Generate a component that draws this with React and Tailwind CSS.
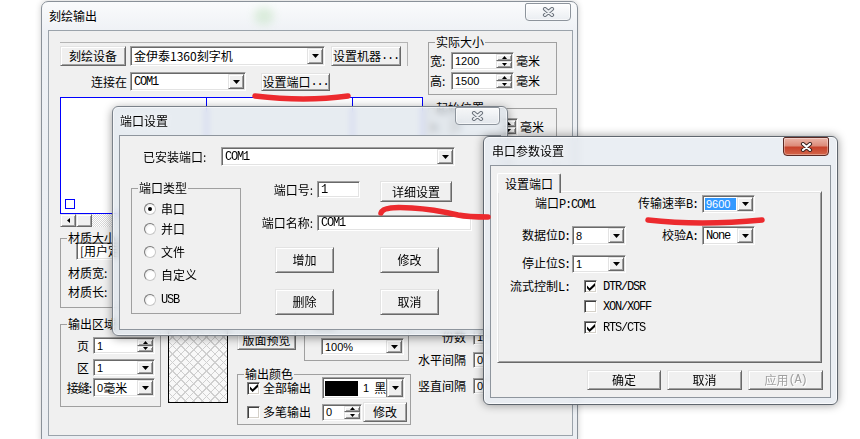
import React from "react";

const mono = "font-['Liberation_Mono','Noto_Sans_CJK_SC',monospace] text-[12px] tracking-[-1.2px]";
const sans = "font-['Liberation_Sans','Noto_Sans_CJK_SC',sans-serif] text-[11px]";
const raised =
  "bg-[#f0f0f0] border border-t-[#e3e3e3] border-l-[#e3e3e3] border-r-[#696969] border-b-[#696969] shadow-[inset_1px_1px_0_#ffffff,inset_-1px_-1px_0_#a0a0a0]";
const sunken =
  "bg-white border border-t-[#a0a0a0] border-l-[#a0a0a0] border-r-white border-b-white shadow-[inset_1px_1px_0_#696969,inset_-1px_-1px_0_#e3e3e3]";

function Btn({ className = "", children, disabled = false }) {
  return (
    <div
      className={`${raised} shrink-0 flex items-center justify-center whitespace-nowrap leading-[12px] ${
        disabled ? "text-[#a0a0a0] [text-shadow:1px_1px_0_#ffffff]" : ""
      } ${className}`}
    >
      {children}
    </div>
  );
}

function DropBtn() {
  return (
    <div className={`${raised} w-[16px] shrink-0 flex items-center justify-center`}>
      <svg width="7" height="4" viewBox="0 0 7 4">
        <path d="M0 0h7L3.5 4z" fill="#000" />
      </svg>
    </div>
  );
}

function Combo({ className = "", textClass = "", children }) {
  return (
    <div className={`${sunken} shrink-0 flex items-stretch p-[1px] ${className}`}>
      <div className={`flex-1 min-w-0 flex items-center pl-[2px] overflow-hidden whitespace-nowrap leading-[12px] ${textClass}`}>
        {children}
      </div>
      <DropBtn />
    </div>
  );
}

function Field({ className = "", textClass = "", children }) {
  return (
    <div className={`${sunken} shrink-0 flex items-center pl-[3px] overflow-hidden whitespace-nowrap leading-[12px] ${textClass} ${className}`}>
      {children}
    </div>
  );
}

function SpinField({ className = "", textClass = "", children }) {
  return (
    <div className={`${sunken} shrink-0 flex items-stretch p-[1px] ${className}`}>
      <div className={`flex-1 min-w-0 flex items-center pl-[2px] overflow-hidden whitespace-nowrap leading-[12px] ${textClass}`}>
        {children}
      </div>
      <div className="w-[16px] shrink-0 flex flex-col">
        <div className={`${raised} flex-1 flex items-center justify-center`}>
          <svg width="5" height="3" viewBox="0 0 5 3">
            <path d="M2.5 0L5 3H0z" fill="#000" />
          </svg>
        </div>
        <div className={`${raised} flex-1 flex items-center justify-center`}>
          <svg width="5" height="3" viewBox="0 0 5 3">
            <path d="M0 0h5L2.5 3z" fill="#000" />
          </svg>
        </div>
      </div>
    </div>
  );
}

function Group({ title, className = "", children }) {
  return (
    <fieldset className={`border border-[#a0a0a0] min-w-0 shrink-0 ${className}`}>
      <legend className="ml-[6px] px-[1px] leading-[12px] whitespace-nowrap">{title}</legend>
      {children}
    </fieldset>
  );
}

function Radio({ on = false }) {
  return (
    <span className="w-[12px] h-[12px] shrink-0 rounded-full border border-t-[#7a7a7a] border-l-[#7a7a7a] border-r-[#c8c8c8] border-b-[#c8c8c8] bg-[radial-gradient(circle_at_65%_65%,#ffffff_0%,#ffffff_45%,#d6d6d6_100%)] flex items-center justify-center">
      {on && <span className="w-[4px] h-[4px] rounded-full bg-black" />}
    </span>
  );
}

function Check({ on = false }) {
  return (
    <span className="w-[13px] h-[13px] shrink-0 bg-white border border-t-[#808080] border-l-[#808080] border-r-white border-b-white shadow-[inset_1px_1px_0_#404040,inset_-1px_-1px_0_#d4d0c8] flex items-center justify-center">
      {on && (
        <svg width="8" height="8" viewBox="0 0 7 7">
          <path d="M0 2.2L2.3 4.5L7 0V2.6L2.3 7L0 4.7Z" fill="#000" />
        </svg>
      )}
    </span>
  );
}

function CloseBtn({ active = false, className = "" }) {
  return (
    <div
      className={`shrink-0 rounded-b-[4px] rounded-t-[2px] border flex items-center justify-center ${
        active
          ? "border-[#5c2a24] bg-[linear-gradient(180deg,#ebb6a9_0%,#dd8c7a_45%,#c7432c_55%,#d4664a_100%)] shadow-[inset_0_0_0_1px_rgba(255,255,255,0.35)]"
          : "border-[#8d949c] bg-[linear-gradient(180deg,rgba(255,255,255,0.8)_0%,rgba(228,232,237,0.6)_100%)] shadow-[inset_0_0_0_1px_rgba(255,255,255,0.6)]"
      } ${className}`}
    >
      <svg width="13" height="10" viewBox="0 0 13 10">
        <path d="M3 2L10 8M10 2L3 8" stroke={active ? "#3c2420" : "#6c737c"} strokeWidth="4.2" strokeLinecap="round" fill="none" />
        <path d="M3 2L10 8M10 2L3 8" stroke={active ? "#ffffff" : "#eceff2"} strokeWidth="2.2" strokeLinecap="round" fill="none" />
      </svg>
    </div>
  );
}

function MainWindow() {
  return (
    <div className="absolute left-[41px] top-[1px] w-[537px] h-[442px] rounded-t-[7px] border border-[#8a9199] bg-[linear-gradient(180deg,#fafbfc_0px,#eef1f5_30px,#ebeef2_100%)] shadow-[0_0_6px_rgba(0,0,0,0.2)] flex flex-col pl-[6px] pr-[4px] pb-[6px]">
      <div className="relative h-[28px] shrink-0 flex items-start">
        <span className="ml-[1px] mt-[8px] leading-[12px] [text-shadow:0_0_5px_#ffffff]">刻绘输出</span>
        <div className="absolute left-[206px] top-[5px] w-[20px] h-[18px] rounded-full bg-[#9fd59a] opacity-30 blur-[4px]" />
        <CloseBtn className="ml-auto mt-[1px] mr-[2px] w-[46px] h-[18px]" />
      </div>
      <div className="flex-1 min-h-0 overflow-hidden border border-[#9ba3ab] bg-[#f0f0f0] pl-[11px] pt-[5px] flex flex-col">
        {/* top section */}
        <div className="flex items-start shrink-0">
          <div className="w-[363px] mt-[6px] shrink-0 flex flex-col">
            <div className="w-[348px] h-[24px] border-t border-r border-[#b4b4b4] flex items-end">
              <Btn className="w-[66px] h-[20px]">刻绘设备</Btn>
              <Combo className="ml-[4px] w-[195px] h-[20px]">金伊泰1360刻字机</Combo>
              <Btn className="ml-[6px] w-[70px] h-[20px]">
                设置机器<span className={mono}>...</span>
              </Btn>
            </div>
            <div className="mt-[6px] h-[19px] flex items-center">
              <span className="w-[67px] text-right leading-[12px]">连接在</span>
              <Combo className="ml-[3px] w-[116px] h-[19px]" textClass={mono}>
                COM1
              </Combo>
              <Btn className="ml-[15px] w-[69px] h-[18px]">
                设置端口<span className={mono}>...</span>
              </Btn>
            </div>
            <div className="mt-[6px] h-[117px] border border-[#0000ff] bg-white flex">
              <div className="w-[145px] flex flex-col justify-end pl-[4px] pb-[4px]">
                <div className="w-[10px] h-[10px] border border-[#0000ff]" />
              </div>
              <div className="w-[146px] border-l border-[#0000ff]" />
              <div className="flex-1 border-l border-[#0000ff]" />
            </div>
            <div className="h-[13px] flex">
              <div className={`${raised} w-[16px] flex items-center justify-center`}>
                <svg width="3" height="5" viewBox="0 0 3 5">
                  <path d="M3 0v5L0 2.5z" fill="#000" />
                </svg>
              </div>
              <div className={`${raised} w-[16px]`} />
              <div className="flex-1 bg-[image:repeating-conic-gradient(#d8d8d8_0_25%,#ffffff_0_50%)] bg-[length:2px_2px]" />
            </div>
          </div>
          <div className="ml-[5px] w-[129px] shrink-0 flex flex-col">
            <Group title="实际大小" className="h-[59px]">
              <div className="pl-[1px] pt-[4px] flex flex-col gap-[2px]">
                <div className="h-[18px] flex items-center">
                  <span className="w-[20px] leading-[12px]">宽:</span>
                  <SpinField className="ml-[1px] w-[63px] h-[18px]" textClass={sans}>
                    1200
                  </SpinField>
                  <span className="ml-[2px] leading-[12px]">毫米</span>
                </div>
                <div className="h-[18px] flex items-center">
                  <span className="w-[20px] leading-[12px]">高:</span>
                  <SpinField className="ml-[1px] w-[63px] h-[18px]" textClass={sans}>
                    1500
                  </SpinField>
                  <span className="ml-[2px] leading-[12px]">毫米</span>
                </div>
              </div>
            </Group>
            <Group title="起始位置" className="mt-[7px] h-[118px]">
              <div className="pl-[1px] pt-[4px] flex flex-col gap-[4px]">
                <div className="h-[18px] flex items-center">
                  <span className="w-[20px] leading-[12px]">X:</span>
                  <SpinField className="ml-[1px] w-[67px] h-[18px]" textClass={sans}>
                    0
                  </SpinField>
                  <span className="ml-[2px] leading-[12px]">毫米</span>
                </div>
              </div>
            </Group>
          </div>
        </div>

        {/* bottom section */}
        <Group title="材质大小" className="mt-[5px] w-[240px] h-[76px]">
          <Combo className="ml-[15px] -mt-[2px] w-[150px] h-[18px]">[用户定义]</Combo>
          <div className="mt-[4px] h-[17px] flex items-center pl-[7px]">
            <span className="leading-[12px]">材质宽:</span>
          </div>
          <div className="mt-[2px] h-[17px] flex items-center pl-[7px]">
            <span className="leading-[12px]">材质长:</span>
          </div>
        </Group>

        <div className="mt-[10px] flex items-start">
          <Group title="输出区域" className="w-[101px] h-[89px]">
            <div className="flex flex-col">
              <div className="mt-[7px] h-[17px] flex items-center">
                <span className="w-[32px] pr-[4px] text-right leading-[12px]">页</span>
                <SpinField className="w-[62px] h-[17px]" textClass={sans}>
                  1
                </SpinField>
              </div>
              <div className="mt-[5px] h-[17px] flex items-center">
                <span className="w-[32px] pr-[4px] text-right leading-[12px]">区</span>
                <Combo className="w-[62px] h-[17px]" textClass={sans}>
                  1
                </Combo>
              </div>
              <div className="mt-[2px] h-[19px] flex items-center">
                <span className="w-[32px] pr-[2px] text-right whitespace-nowrap tracking-[-1px] leading-[12px]">接缝:</span>
                <Combo className="w-[62px] h-[19px]">
                  <span className={sans}>0</span>毫米
                </Combo>
              </div>
            </div>
          </Group>

          <div className="ml-[7px] mt-[8px] w-[60px] h-[77px] shrink-0 border border-black bg-[#f8f8f8] bg-[image:repeating-linear-gradient(45deg,#cfcfcf_0_1px,transparent_1px_6px),repeating-linear-gradient(-45deg,#cfcfcf_0_1px,transparent_1px_6px)]" />

          <div className="ml-[9px] w-[174px] shrink-0 flex flex-col">
            <div className="flex items-start">
              <Btn className="mt-[12px] w-[59px] h-[20px]">版面预览</Btn>
              <Group title="缩放" className="ml-[8px] w-[105px] h-[43px]">
                <Combo className="ml-[16px] mt-[8px] w-[83px] h-[17px]" textClass={sans}>
                  100%
                </Combo>
              </Group>
            </div>
            <Group title="输出颜色" className="mt-[7px] w-[174px] h-[57px]">
              <div className="-mt-[3px] h-[22px] flex items-center pl-[9px]">
                <Check on />
                <span className="ml-[3px] w-[57px] leading-[12px]">全部输出</span>
                <div className={`${sunken} ml-[2px] w-[83px] h-[22px] shrink-0 flex items-stretch p-[1px]`}>
                  <div className="flex-1 flex items-center pl-[1px] leading-[12px]">
                    <div className="w-[33px] h-[15px] bg-black" />
                    <span className={`${sans} ml-[5px]`}>1</span>
                    <span className="ml-[5px]">黑</span>
                  </div>
                  <div className="w-[1px] bg-[#808080]" />
                  <DropBtn />
                </div>
              </div>
              <div className="mt-[3px] h-[20px] flex items-center pl-[9px]">
                <Check />
                <span className="ml-[3px] w-[57px] leading-[12px]">多笔输出</span>
                <SpinField className="ml-[2px] w-[40px] h-[17px]" textClass={sans}>
                  0
                </SpinField>
                <Btn className="ml-[1px] w-[44px] h-[20px]">修改</Btn>
              </div>
            </Group>
          </div>

          <div className="ml-[5px] flex flex-col">
            <div className="mt-[11px] h-[16px] flex items-center">
              <span className="w-[50px] text-right leading-[12px]">份数</span>
              <Field className="ml-[7px] w-[30px] h-[16px]" textClass={sans}>
                1
              </Field>
            </div>
            <div className="mt-[7px] h-[16px] flex items-center">
              <span className="w-[50px] text-right leading-[12px]">水平间隔</span>
              <Field className="ml-[7px] w-[30px] h-[16px]" textClass={sans}>
                0
              </Field>
            </div>
            <div className="mt-[10px] h-[16px] flex items-center">
              <span className="w-[50px] text-right leading-[12px]">竖直间隔</span>
              <Field className="ml-[7px] w-[30px] h-[16px]" textClass={sans}>
                0
              </Field>
            </div>
          </div>
        </div>
      </div>
    </div>
  );
}

function PortDialog() {
  return (
    <div className="absolute left-[112px] top-[106px] w-[396px] h-[230px] rounded-[6px] border border-[#7b828a] bg-[rgba(222,228,235,0.72)] backdrop-blur-[3px] shadow-[0_2px_10px_rgba(0,0,0,0.4),inset_0_0_0_1px_rgba(255,255,255,0.55)] flex flex-col px-[6px] pb-[5px]">
      <div className="h-[28px] shrink-0 flex items-start">
        <span className="ml-[1px] mt-[8px] leading-[12px] [text-shadow:0_0_5px_#ffffff]">端口设置</span>
        <CloseBtn className="ml-auto mr-[1px] w-[45px] h-[18px]" />
      </div>
      <div className="flex-1 min-h-0 border border-[#8e959d] bg-[#f0f0f0] flex flex-col overflow-hidden">
        <div className="mt-[11px] h-[19px] flex items-center">
          <span className="ml-[23px] w-[74px] leading-[12px] whitespace-nowrap">已安装端口:</span>
          <Combo className="ml-[4px] w-[234px] h-[19px]" textClass={mono}>
            COM1
          </Combo>
        </div>
        <div className="flex items-start">
          <Group title="端口类型" className="ml-[11px] mt-[16px] w-[110px] h-[132px]">
            <div className="flex flex-col pl-[12px]">
              <div className="mt-[8px] h-[14px] flex items-center">
                <Radio on />
                <span className="ml-[5px] leading-[12px]">串口</span>
              </div>
              <div className="mt-[6px] h-[14px] flex items-center">
                <Radio />
                <span className="ml-[5px] leading-[12px]">并口</span>
              </div>
              <div className="mt-[9px] h-[14px] flex items-center">
                <Radio />
                <span className="ml-[5px] leading-[12px]">文件</span>
              </div>
              <div className="mt-[9px] h-[14px] flex items-center">
                <Radio />
                <span className="ml-[5px] leading-[12px]">自定义</span>
              </div>
              <div className="mt-[11px] h-[14px] flex items-center">
                <Radio />
                <span className={`ml-[5px] leading-[12px] ${mono}`}>USB</span>
              </div>
            </div>
          </Group>
          <div className="ml-[12px] flex flex-col">
            <div className="mt-[15px] flex items-start">
              <span className="w-[60px] h-[17px] flex items-center justify-end leading-[12px] whitespace-nowrap">端口号:</span>
              <Field className="ml-[4px] w-[43px] h-[17px]" textClass={mono}>
                1
              </Field>
              <Btn className="ml-[20px] w-[72px] h-[21px]">详细设置</Btn>
            </div>
            <div className="mt-[13px] flex items-center">
              <span className="w-[60px] text-right leading-[12px] whitespace-nowrap">端口名称:</span>
              <Field className="ml-[4px] w-[155px] h-[16px]" textClass={mono}>
                COM1
              </Field>
            </div>
            <div className="mt-[16px] flex items-center">
              <Btn className="ml-[22px] w-[59px] h-[26px]">增加</Btn>
              <Btn className="ml-[46px] w-[59px] h-[26px]">修改</Btn>
            </div>
            <div className="mt-[16px] flex items-center">
              <Btn className="ml-[22px] w-[59px] h-[26px]">删除</Btn>
              <Btn className="ml-[46px] w-[59px] h-[26px]">取消</Btn>
            </div>
          </div>
        </div>
      </div>
    </div>
  );
}

function SerialDialog() {
  return (
    <div className="absolute left-[483px] top-[136px] w-[355px] h-[269px] rounded-[6px] border border-[#5f666e] bg-[rgba(230,235,241,0.86)] backdrop-blur-[3px] shadow-[0_0_10px_rgba(0,0,0,0.4),inset_0_0_0_1px_rgba(255,255,255,0.7)] flex flex-col px-[6px] pb-[6px]">
      <div className="h-[28px] shrink-0 flex items-start">
        <span className="ml-[2px] mt-[8px] leading-[12px] [text-shadow:0_0_5px_#ffffff]">串口参数设置</span>
        <CloseBtn active className="ml-auto mr-[2px] w-[46px] h-[19px]" />
      </div>
      <div className="flex-1 min-h-0 border border-[#8e959d] bg-[#f0f0f0] flex flex-col overflow-hidden">
        <div className="ml-[6px] mt-[7px] relative z-10 w-[64px] h-[20px] bg-[#f0f0f0] border-t border-l border-r border-t-white border-l-white border-r-[#696969] shadow-[inset_-1px_0_0_#a0a0a0] rounded-t-[2px] flex items-center pl-[7px] leading-[12px]">
          设置端口
        </div>
        <div className="ml-[6px] -mt-[2px] w-[325px] h-[172px] shrink-0 bg-[#f0f0f0] border border-t-white border-l-white border-r-[#696969] border-b-[#696969] shadow-[inset_1px_1px_0_#e3e3e3,inset_-1px_-1px_0_#a0a0a0] flex flex-col">
          <div className="mt-[3px] h-[18px] flex items-center">
            <div className="w-[128px] shrink-0 flex items-center">
              <span className="ml-[37px] leading-[12px] whitespace-nowrap">
                端口<span className={mono}>P:COM1</span>
              </span>
            </div>
            <span className="w-[76px] pr-[4px] text-right leading-[12px] whitespace-nowrap">
              传输速率<span className={mono}>B:</span>
            </span>
            <div className={`${sunken} w-[53px] h-[18px] shrink-0 flex items-stretch p-[1px]`}>
              <div className="flex-1 m-[1px] bg-[#3399ff] text-white flex items-center pl-[1px] leading-[12px]">
                <span className={sans}>9600</span>
              </div>
              <DropBtn />
            </div>
          </div>
          <div className="mt-[13px] h-[19px] flex items-center">
            <span className="w-[72px] text-right leading-[12px] whitespace-nowrap">
              数据位<span className={mono}>D:</span>
            </span>
            <Combo className="ml-[2px] w-[54px] h-[19px]" textClass={sans}>
              8
            </Combo>
            <span className="w-[76px] pr-[4px] text-right leading-[12px] whitespace-nowrap">
              校验<span className={mono}>A:</span>
            </span>
            <Combo className="w-[53px] h-[19px]" textClass={mono}>
              None
            </Combo>
          </div>
          <div className="mt-[10px] h-[18px] flex items-center">
            <span className="w-[72px] text-right leading-[12px] whitespace-nowrap">
              停止位<span className={mono}>S:</span>
            </span>
            <Combo className="ml-[2px] w-[54px] h-[18px]" textClass={sans}>
              1
            </Combo>
          </div>
          <div className="mt-[7px] h-[13px] flex items-center">
            <span className="w-[72px] text-right leading-[12px] whitespace-nowrap">
              流式控制<span className={mono}>L:</span>
            </span>
            <span className="ml-[14px]">
              <Check on />
            </span>
            <span className={`ml-[6px] leading-[12px] ${mono}`}>DTR/DSR</span>
          </div>
          <div className="mt-[7px] h-[13px] flex items-center pl-[86px]">
            <Check />
            <span className={`ml-[6px] leading-[12px] ${mono}`}>XON/XOFF</span>
          </div>
          <div className="mt-[8px] h-[13px] flex items-center pl-[86px]">
            <Check on />
            <span className={`ml-[6px] leading-[12px] ${mono}`}>RTS/CTS</span>
          </div>
        </div>
        <div className="mt-[7px] flex justify-end gap-[6px] pr-[7px]">
          <Btn className="w-[74px] h-[20px]">确定</Btn>
          <Btn className="w-[75px] h-[20px]">取消</Btn>
          <Btn disabled className="w-[75px] h-[20px]">
            应用<span className={mono}>(A)</span>
          </Btn>
        </div>
      </div>
    </div>
  );
}

function RedMarks() {
  return (
    <svg className="absolute left-0 top-0 pointer-events-none z-50" width="860" height="439" viewBox="0 0 860 439">
      <g fill="none" stroke="#ec2a2e" strokeWidth="5.5" strokeLinecap="round" strokeLinejoin="round">
        <path d="M255 96 Q 305 102 348 96" />
        <path d="M381 213 C 383 207, 395 207, 412 208 C 430 209, 445 212, 458 215 C 468 217, 478 217, 488 217" />
        <path d="M648 220 Q 700 226 762 220" />
      </g>
    </svg>
  );
}

export default function App() {
  return (
    <div className="relative w-[860px] h-[439px] overflow-hidden bg-white text-black text-[12px] leading-[14px] font-['Noto_Sans_CJK_SC','Noto_Sans',sans-serif]">
      <MainWindow />
      <PortDialog />
      <SerialDialog />
      <RedMarks />
    </div>
  );
}
